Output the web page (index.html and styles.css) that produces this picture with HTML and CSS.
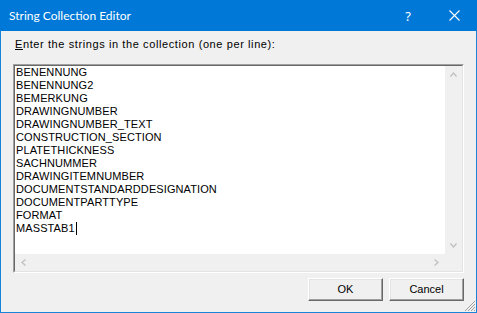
FILE: index.html
```html
<!DOCTYPE html>
<html>
<head>
<meta charset="utf-8">
<link rel="stylesheet" href="styles.css">
</head>
<body>
<div class="window">
  <div class="titlebar">
    <span class="title">String Collection Editor</span>
    <span class="tb-btn help">?</span>
    <span class="tb-btn close"><svg width="11" height="11" viewBox="0 0 11 11"><path d="M0.5 0.5L10.5 10.5M10.5 0.5L0.5 10.5" stroke="#fff" stroke-width="1.1" fill="none"/></svg></span>
  </div>
  <div class="body">
    <div class="label"><u>E</u>nter the strings in the collection (one per line):</div>
    <div class="editor">
      <div class="editor-inner">
        <div class="text">
          <div>BENENNUNG</div>
          <div>BENENNUNG2</div>
          <div>BEMERKUNG</div>
          <div>DRAWINGNUMBER</div>
          <div>DRAWINGNUMBER_TEXT</div>
          <div>CONSTRUCTION_SECTION</div>
          <div>PLATETHICKNESS</div>
          <div>SACHNUMMER</div>
          <div>DRAWINGITEMNUMBER</div>
          <div>DOCUMENTSTANDARDDESIGNATION</div>
          <div>DOCUMENTPARTTYPE</div>
          <div>FORMAT</div>
          <div>MASSTAB1<span class="caret"></span></div>
        </div>
        <div class="vscroll">
          <span class="arrow"><svg width="7" height="5" viewBox="0 0 7 5"><path d="M0.5 4.5L3.5 1L6.5 4.5" stroke="#c0c0c0" stroke-width="1.3" fill="none"/></svg></span>
          <span class="arrow"><svg width="7" height="5" viewBox="0 0 7 5"><path d="M0.5 0.5L3.5 4L6.5 0.5" stroke="#c0c0c0" stroke-width="1.3" fill="none"/></svg></span>
        </div>
        <div class="hscroll">
          <span class="arrow"><svg width="5" height="7" viewBox="0 0 5 7"><path d="M4.5 0.5L1 3.5L4.5 6.5" stroke="#c0c0c0" stroke-width="1.3" fill="none"/></svg></span>
          <span class="arrow"><svg width="5" height="7" viewBox="0 0 5 7"><path d="M0.5 0.5L4 3.5L0.5 6.5" stroke="#c0c0c0" stroke-width="1.3" fill="none"/></svg></span>
        </div>
        <div class="corner"></div>
      </div>
    </div>
    <div class="buttons">
      <div class="btn">OK</div>
      <div class="btn">Cancel</div>
    </div>
  </div>
  <svg class="grip" width="12" height="12" viewBox="0 0 12 12"><path d="M11 1L1 11M11 4L4 11M11 7L7 11M11 10L10 11" stroke="#a0a0a0" stroke-width="1" fill="none"/></svg>
</div>
</body>
</html>
```
FILE: styles.css
```css
html, body {
  margin: 0;
  padding: 0;
  background: #f0f0f0;
}
.window {
  position: relative;
  width: 477px;
  height: 313px;
  box-sizing: border-box;
  border: 1px solid #1a84d8;
  border-top: none;
  background: #f0f0f0;
  display: flex;
  flex-direction: column;
  font-family: "Liberation Sans", Arial, sans-serif;
  font-size: 11px;
  color: #000;
}
.titlebar {
  height: 31px;
  margin: 0 -1px;
  background: #0078d7;
  display: flex;
  align-items: center;
  color: #fff;
}
.title {
  font-family: Lato, "Noto Sans", sans-serif;
  font-size: 12px;
  padding-left: 9px;
  flex: 1;
}
.tb-btn {
  width: 46px;
  height: 31px;
  display: flex;
  align-items: center;
  justify-content: center;
}
.help {
  font-family: "Noto Sans", sans-serif;
  font-size: 13px;
}
.close {
  width: 46px;
}
.body {
  flex: 1;
  display: flex;
  flex-direction: column;
  padding: 7px 12px 11px 12px;
}
.label {
  line-height: 13px;
  height: 13px;
  padding-left: 2px;
  letter-spacing: 0.6px;
}
.label u {
  text-decoration-thickness: 1px;
  text-underline-offset: 1px;
}
.editor {
  margin-top: 13px;
  height: 209px;
  box-sizing: border-box;
  border: 1px solid;
  border-color: #a0a0a0 #ffffff #ffffff #a0a0a0;
}
.editor-inner {
  height: 100%;
  box-sizing: border-box;
  border: 1px solid;
  border-color: #696969 #e3e3e3 #e3e3e3 #696969;
  display: grid;
  grid-template-columns: 1fr 17px;
  grid-template-rows: 1fr 17px;
}
.text {
  background: #fff;
  padding: 0 0 0 1px;
  line-height: 13px;
  letter-spacing: 0.1px;
}
.caret {
  display: inline-block;
  width: 1px;
  height: 13px;
  background: #000;
  vertical-align: top;
  margin-left: 1px;
}
.vscroll {
  background: #f0f0f0;
  display: flex;
  flex-direction: column;
  justify-content: space-between;
}
.hscroll {
  background: #f0f0f0;
  display: flex;
  justify-content: space-between;
}
.arrow {
  width: 17px;
  height: 17px;
  display: flex;
  align-items: center;
  justify-content: center;
}
.corner {
  background: #f0f0f0;
}
.buttons {
  margin-top: 5px;
  display: flex;
  justify-content: flex-end;
  gap: 6px;
}
.btn {
  width: 75px;
  height: 23px;
  box-sizing: border-box;
  border: 1px solid;
  border-color: #ffffff #696969 #696969 #ffffff;
  box-shadow: inset -1px -1px 0 #a0a0a0, inset 1px 1px 0 #e3e3e3;
  background: #f0f0f0;
  display: flex;
  align-items: center;
  justify-content: center;
  line-height: 13px;
}
.grip {
  position: absolute;
  right: 0;
  bottom: 0;
}
```
